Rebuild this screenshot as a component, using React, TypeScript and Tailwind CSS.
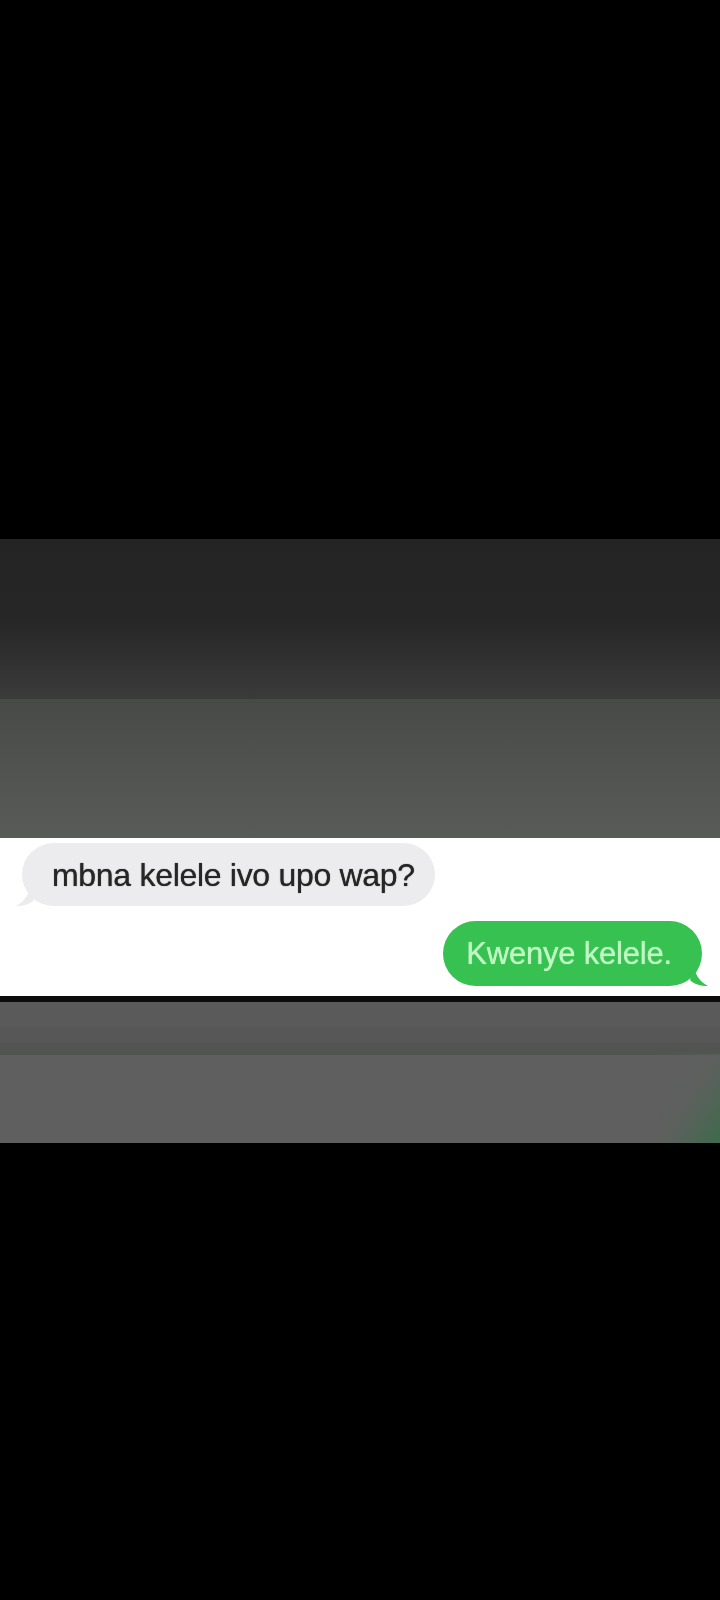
import React from "react";

const font = { fontFamily: '"Liberation Sans", Arial, sans-serif' };

export default function App() {
  return (
    <div className="w-[720px] h-[1600px] bg-black flex flex-col overflow-hidden" style={font}>
      {/* top letterbox */}
      <div className="h-[539px] bg-black" />

      {/* blurry dark header area */}
      <div className="h-[160px] bg-gradient-to-b from-[#242424] via-[#262626] to-[#3b3b3b]" />
      <div className="h-[139px] bg-gradient-to-b from-[#484a48] via-[#515351] to-[#595b59]" />

      {/* chat strip */}
      <div className="h-[158px] bg-white flex flex-col px-[18px] pt-[5px]">
        <div className="self-start relative ml-[4px]">
          <div className="h-[63px] rounded-[32px] bg-[#ececee] flex items-center pl-[30px] pr-[20px]">
            <span className="text-[32px] leading-none text-[#262626] tracking-[-0.3px] blur-[0.4px] [text-shadow:0_0_1px_#262626]">
              mbna kelele ivo upo wap?
            </span>
          </div>
          <svg className="absolute -left-[8px] bottom-0" width="22" height="22" viewBox="0 0 22 22">
            <path d="M16 0 C16 10 10 18 2 22 C10 22 16 20 20 16 Z" fill="#ececee" />
          </svg>
        </div>

        <div className="self-end relative mt-[15px]">
          <div className="h-[65px] rounded-[33px] bg-[#36c150] flex items-center pl-[23px] pr-[30px]">
            <span className="text-[31px] leading-none text-[#c0f7c4] tracking-[-0.2px] blur-[0.4px] [text-shadow:0_0_1px_#c0f7c4]">
              Kwenye kelele.
            </span>
          </div>
          <svg className="absolute -right-[8px] bottom-0" width="22" height="22" viewBox="0 0 22 22">
            <path d="M6 0 C6 10 12 18 20 22 C12 22 6 20 2 16 Z" fill="#36c150" />
          </svg>
        </div>
      </div>

      {/* divider + lower blurred area */}
      <div className="h-[6px] bg-[#0c0c0c]" />
      <div className="h-[141px] relative flex flex-col">
        <div className="h-[25px] bg-[#5a5a5a]" />
        <div className="h-[16px] bg-[#575757]" />
        <div className="h-[12px] bg-[#525452]" />
        <div className="flex-1 bg-[#5f5f5f]" />
        <div className="absolute right-0 bottom-0 w-[60px] h-[90px] bg-gradient-to-tl from-[#3f6a4c] via-[#5a615c]/40 to-transparent" />
      </div>

      {/* bottom letterbox */}
      <div className="flex-1 bg-black" />
    </div>
  );
}
